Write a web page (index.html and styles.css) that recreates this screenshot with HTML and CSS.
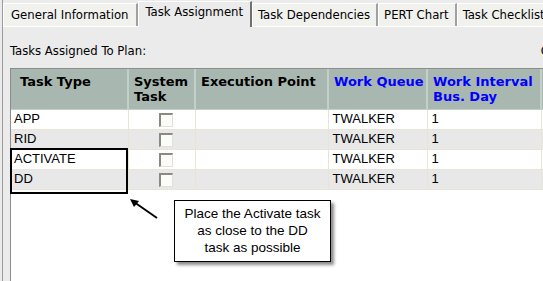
FILE: index.html
```html
<!DOCTYPE html>
<html>
<head>
    <meta charset="UTF-8">
    <title>Task Assignment</title>
    <link rel="stylesheet" href="styles.css">
</head>
<body>
    <div class="window">
        <div class="tabs">
            <div class="tab first">General Information</div>
            <div class="tab active">Task Assignment</div>
            <div class="tab">Task Dependencies</div>
            <div class="tab">PERT Chart</div>
            <div class="tab">Task Checklist</div>
        </div>
        <div class="panel">
            <div class="caption">
                <span>Tasks Assigned To Plan:</span>
                <span class="cut">C</span>
            </div>
            <div class="grid">
                <table>
                    <colgroup>
                        <col class="c-type">
                        <col class="c-sys">
                        <col class="c-exec">
                        <col class="c-queue">
                        <col class="c-int">
                        <col>
                    </colgroup>
                    <thead>
                        <tr>
                            <th>Task Type</th>
                            <th>System<br>Task</th>
                            <th>Execution Point</th>
                            <th class="link">Work Queue</th>
                            <th class="link">Work Interval<br>Bus. Day</th>
                            <th></th>
                        </tr>
                    </thead>
                    <tbody>
                        <tr>
                            <td>APP</td>
                            <td class="check"><span class="box"></span></td>
                            <td></td>
                            <td>TWALKER</td>
                            <td>1</td>
                            <td></td>
                        </tr>
                        <tr>
                            <td>RID</td>
                            <td class="check"><span class="box"></span></td>
                            <td></td>
                            <td>TWALKER</td>
                            <td>1</td>
                            <td></td>
                        </tr>
                        <tr>
                            <td>ACTIVATE</td>
                            <td class="check"><span class="box"></span></td>
                            <td></td>
                            <td>TWALKER</td>
                            <td>1</td>
                            <td></td>
                        </tr>
                        <tr>
                            <td>DD</td>
                            <td class="check"><span class="box"></span></td>
                            <td></td>
                            <td>TWALKER</td>
                            <td>1</td>
                            <td></td>
                        </tr>
                    </tbody>
                </table>
            </div>
        </div>

        <!-- annotation overlay -->
        <div class="highlight"></div>
        <svg class="arrow" width="40" height="30" viewBox="0 0 40 30">
            <line x1="29" y1="20" x2="6" y2="4" stroke="#000" stroke-width="2"/>
            <polygon points="2,1 11,3 6,9" fill="#000"/>
        </svg>
        <div class="callout">Place the Activate task<br>as close to the DD<br>task as possible</div>
    </div>
</body>
</html>
```

FILE: styles.css
```css
body {
    margin: 0;
    padding: 0;
    background: #ebebeb;
    font-family: 'Liberation Sans', Arial, sans-serif;
}
.window {
    position: relative;
    width: 543px;
    height: 281px;
    overflow: hidden;
    background: #ebebeb;
    box-sizing: border-box;
    padding-left: 2px;
}
.window::before {
    content: '';
    position: absolute;
    left: 2px;
    top: 0;
    bottom: 0;
    border-left: 1px solid #9a9a9a;
}
.tabs {
    display: flex;
    height: 26px;
    align-items: flex-end;
    padding-left: 1px;
    border-bottom: 1px solid #fff;
    white-space: nowrap;
}
.tab {
    height: 23px;
    box-sizing: border-box;
    padding: 3px 6px 0 5px;
    background: #f1f1ee;
    border-top: 1px solid #fff;
    border-left: 1px solid #fff;
    border-right: 2px solid #a0a0a0;
    font-family: 'DejaVu Sans Condensed', 'DejaVu Sans', Tahoma, sans-serif;
    font-size: 13px;
    color: #000;
}
.tab.first {
    padding: 3px 8px 0 7px;
}
.tab.active {
    height: 26px;
    padding: 2px 7px 0 6px;
    background: #ebebeb;
    border-right: 2px solid #707070;
    margin-bottom: -1px;
}
.panel {
    padding: 16px 0 0 8px;
}
.caption {
    display: flex;
    justify-content: space-between;
    height: 25px;
    font-family: 'DejaVu Sans Condensed', 'DejaVu Sans', Tahoma, sans-serif;
    font-size: 13px;
}
.cut {
    margin-right: -6px;
}
.grid {
    height: 220px;
    background: #fff;
    border-top: 1px solid #8c8c8c;
    border-left: 1px solid #8c8c8c;
}
table {
    border-collapse: collapse;
    table-layout: fixed;
    width: 560px;
}
.c-type { width: 117px; }
.c-sys { width: 67px; }
.c-exec { width: 133px; }
.c-queue { width: 99px; }
.c-int { width: 114px; }
th {
    height: 40px;
    padding: 5px 5px 0;
    box-sizing: border-box;
    background: #a8b8b1;
    border-right: 2px solid #c3cfc9;
    border-bottom: 1px solid #c3cfc9;
    text-align: left;
    vertical-align: top;
    white-space: nowrap;
    font-family: 'DejaVu Sans', Verdana, sans-serif;
    font-size: 13px;
    font-weight: bold;
    line-height: 15px;
    color: #000;
}
th:first-child {
    padding-left: 9px;
}
th.link {
    color: #0000ff;
}
td {
    height: 19px;
    padding: 0 0 0 4px;
    border-right: 1px solid #e9e5d6;
    border-bottom: 1px solid #e9e5d6;
    font-size: 13px;
    line-height: 18px;
    color: #000;
}
td:first-child {
    padding-left: 3px;
}
tbody tr:nth-child(even) td {
    background: #e8e8e8;
}
.check {
    text-align: center;
}
.box {
    display: inline-block;
    vertical-align: middle;
    width: 11px;
    height: 11px;
    margin-left: 4px;
    background: #fbfbf7;
    border-top: 2px solid #8a8a80;
    border-left: 2px solid #8a8a80;
    border-right: 1px solid #e0e0d8;
    border-bottom: 1px solid #e0e0d8;
}
.highlight {
    position: absolute;
    left: 10px;
    top: 148px;
    width: 114px;
    height: 42px;
    border: 2px solid #000;
}
.arrow {
    position: absolute;
    left: 128px;
    top: 198px;
}
.callout {
    position: absolute;
    left: 174px;
    top: 200px;
    width: 157px;
    height: 62px;
    padding-top: 4px;
    box-sizing: border-box;
    background: #fff;
    border: 1px solid #000;
    box-shadow: 3px 3px 3px rgba(0, 0, 0, 0.45);
    text-align: center;
    font-size: 13.5px;
    line-height: 17px;
}
```
